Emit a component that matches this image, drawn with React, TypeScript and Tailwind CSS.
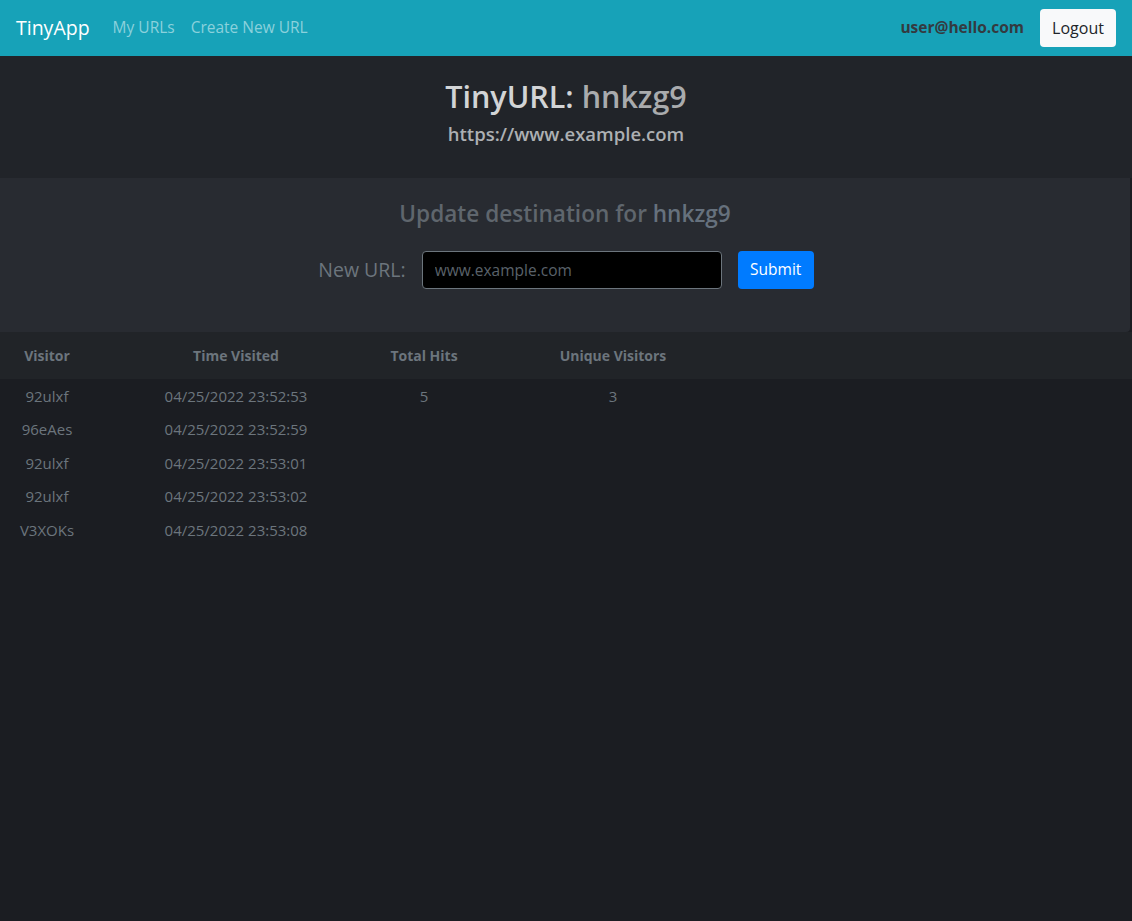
import React from "react";

const rows = [
  ["92ulxf", "04/25/2022 23:52:53", "5", "3"],
  ["96eAes", "04/25/2022 23:52:59", "", ""],
  ["92ulxf", "04/25/2022 23:53:01", "", ""],
  ["92ulxf", "04/25/2022 23:53:02", "", ""],
  ["V3XOKs", "04/25/2022 23:53:08", "", ""],
];

export default function App() {
  return (
    <div
      className="min-h-[921px] bg-[#1b1d22] text-[#6c757d]"
      style={{ fontFamily: '"Open Sans", "Noto Sans", sans-serif' }}
    >
      <nav className="h-[56px] bg-[#17a2b8] flex items-center px-4">
        <span className="text-white text-[19.5px] mr-[23px]">TinyApp</span>
        <span className="text-[#8bd1dc] text-[15.5px] mr-[16px]">My URLs</span>
        <span className="text-[#8bd1dc] text-[15.5px]">Create New URL</span>
        <div className="ml-auto flex items-center">
          <span className="text-[#343a40] font-bold text-[15.5px] mr-[16px]">user@hello.com</span>
          <button className="bg-[#f8f9fa] text-[#212529] text-[16px] rounded-[4px] h-[38px] w-[76px]">
            Logout
          </button>
        </div>
      </nav>

      <header className="bg-[#212429] h-[122px] flex flex-col items-center pt-[17px]">
        <h2 className="text-[30.5px] font-semibold leading-[46px] text-[#d2d4d6]">
          TinyURL: <span className="text-[#a9abad]">hnkzg9</span>
        </h2>
        <h5 className="text-[18.5px] font-semibold leading-[30px] text-[#adb0b3]">https://www.example.com</h5>
      </header>

      <section className="bg-[#282b31] h-[154px] rounded-br-[4px] mr-[2px] flex flex-col items-center pt-[20px]">
        <h4 className="text-[22.6px] leading-[32px] font-semibold text-[#5f666d]">
          Update destination for <span className="text-[#66717d]">hnkzg9</span>
        </h4>
        <div className="flex items-center mt-[21px] ml-[2px]">
          <label className="text-[19.5px] font-medium text-[#6c757d] mr-[16px]">New URL:</label>
          <input
            className="w-[300px] h-[38px] bg-black border border-[#6c757d] rounded-[4px] px-[12px] text-[15.5px] placeholder:text-[#5a626a] text-[#ccc] outline-none"
            placeholder="www.example.com"
          />
          <button className="ml-[16px] w-[76px] h-[38px] bg-[#007bff] text-white text-[15.5px] rounded-[4px]">
            Submit
          </button>
        </div>
      </section>

      <div className="bg-[#212428] h-[47px] flex items-center text-[14px] font-bold text-[#6c757d]">
        <div className="w-[94px] text-center">Visitor</div>
        <div className="w-[284px] text-center">Time Visited</div>
        <div className="w-[92px] text-center">Total Hits</div>
        <div className="w-[286px] text-center">Unique Visitors</div>
      </div>

      <div>
        {rows.map((r, i) => (
          <div key={i} className="h-[33.5px] flex items-center text-[15px] text-[#6c757d]">
            <div className="w-[94px] text-center">{r[0]}</div>
            <div className="w-[284px] text-center">{r[1]}</div>
            <div className="w-[92px] text-center">{r[2]}</div>
            <div className="w-[286px] text-center">{r[3]}</div>
          </div>
        ))}
      </div>
    </div>
  );
}
